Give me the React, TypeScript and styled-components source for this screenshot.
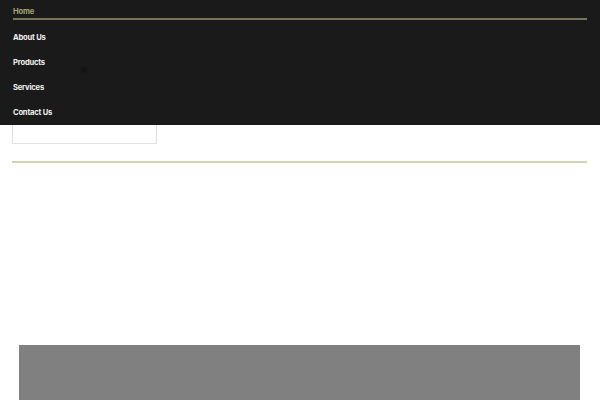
import React from 'react'
import styled, { createGlobalStyle } from 'styled-components'

const GlobalStyle = createGlobalStyle`
    html, body {
        margin: 0;
        padding: 0;
        background: #ffffff;
        font-family: "Inter", "Noto Sans", sans-serif;
    }
    * { box-sizing: border-box; }
`

const Page = styled.div`
    position: relative;
    width: 600px;
    height: 400px;
    overflow: hidden;
`
const Header = styled.header`
    padding: 43px 13px 0 12px;
`
const LogoBox = styled.div`
    width: 145px;
    height: 101px;
    border: 1px solid #e2e2e2;
`
const Divider = styled.hr`
    margin: 17px 0 0;
    border: 0;
    height: 2px;
    background: #d3d4b6;
`
const Banner = styled.section`
    margin: 182px 20px 0 19px;
    height: 120px;
    background: #808080;
`

const MenuOverlay = styled.nav`
    position: absolute;
    top: 0;
    left: 0;
    right: 0;
    height: 125px;
    padding: 0 13px;
    background: #1a1a1a;
`
const MenuList = styled.ul`
    list-style: none;
    margin: 0;
    padding: 0;
`
const MenuItem = styled.li<{ $active?: boolean }>`
    display: flex;
    align-items: ${p => (p.$active ? 'flex-start' : 'center')};
    height: ${p => (p.$active ? '20px' : '25px')};
    padding-top: ${p => (p.$active ? '7px' : '0')};
    margin-bottom: ${p => (p.$active ? '5px' : '0')};
    border-bottom: ${p => (p.$active ? '2px solid #75765a' : '0')};
    font-size: 7.6px;
    line-height: 10px;
    font-weight: 700;
    letter-spacing: -0.2px;
    color: ${p => (p.$active ? '#a5a674' : '#f2f2f2')};
`
const Spinner = styled.span`
    position: absolute;
    top: 67px;
    left: 81px;
    width: 6px;
    height: 6px;
    border-radius: 50%;
    background: #141414;
    filter: blur(1px);
`

const links = ['Home', 'About Us', 'Products', 'Services', 'Contact Us']

const App = () => {
    return (
        <Page>
            <GlobalStyle />
            <Header>
                <LogoBox />
                <Divider />
            </Header>
            <Banner />
            <MenuOverlay>
                <MenuList>
                    {links.map((l, i) => (
                        <MenuItem key={l} $active={i === 0}>{l}</MenuItem>
                    ))}
                </MenuList>
                <Spinner />
            </MenuOverlay>
        </Page>
    )
}

export default App
